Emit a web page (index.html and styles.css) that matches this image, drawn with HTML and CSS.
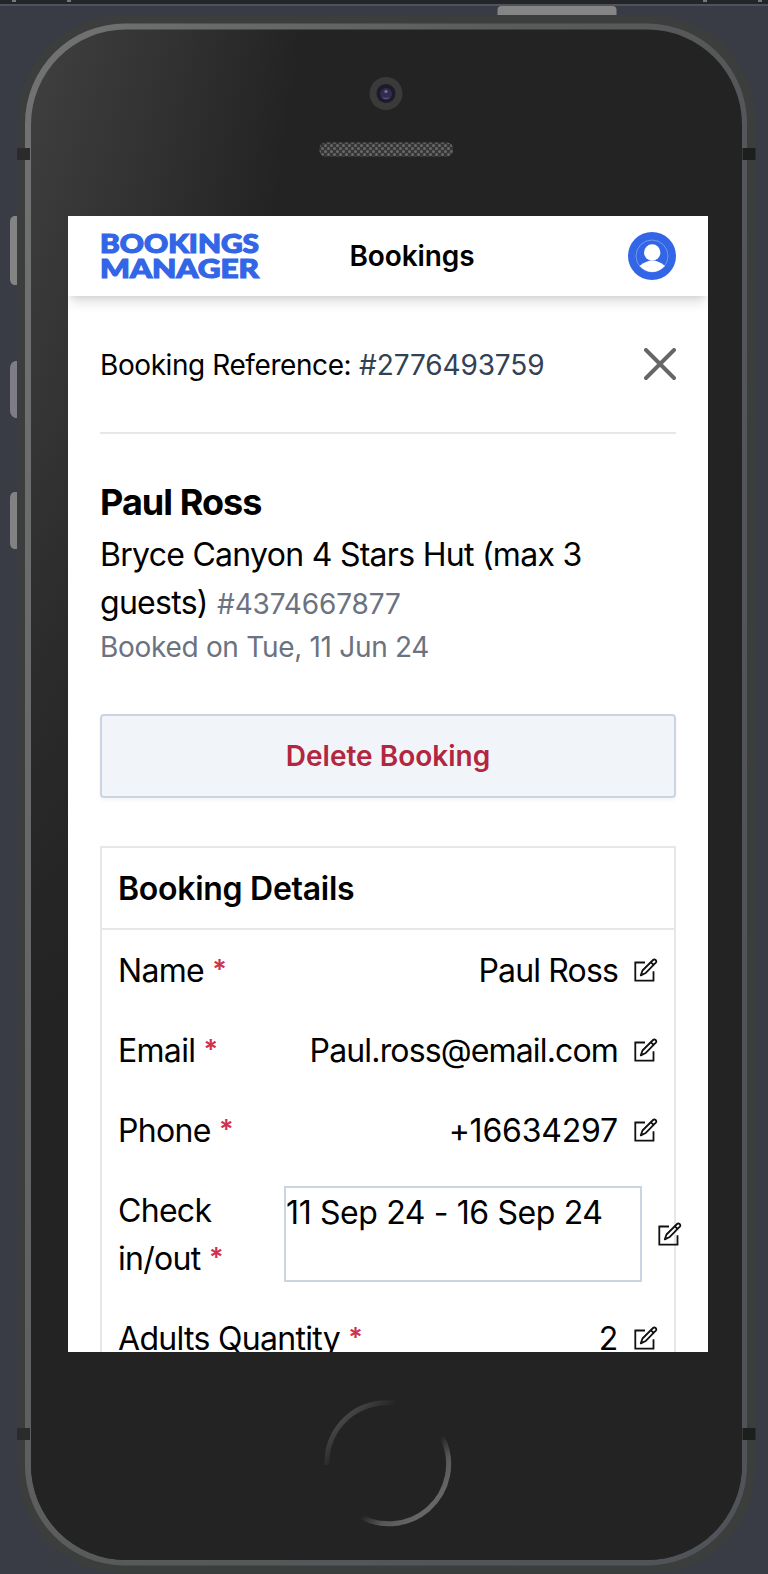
FILE: index.html
```
<!DOCTYPE html>
<html lang="en">
<head>
<meta charset="utf-8">
<title>Bookings Manager</title>
<link rel="stylesheet" href="styles.css">
</head>
<body>
<svg class="device" width="768" height="1574" viewBox="0 0 768 1574" aria-hidden="true">
  <defs>
    <linearGradient id="glass" gradientUnits="userSpaceOnUse" x1="30" y1="110" x2="285" y2="150">
      <stop offset="0" stop-color="#3f3f3f"/><stop offset=".5" stop-color="#323232"/><stop offset="1" stop-color="#232323"/>
    </linearGradient>
    <linearGradient id="fade" x1="0" y1="0" x2="0" y2="1">
      <stop offset="0" stop-color="#232323" stop-opacity="0"/><stop offset=".25" stop-color="#232323" stop-opacity=".2"/><stop offset=".65" stop-color="#232323"/>
    </linearGradient>
    <linearGradient id="edge" x1="0" y1="0" x2="1" y2="0.6">
      <stop offset="0" stop-color="#737373"/><stop offset=".5" stop-color="#595a5a"/><stop offset="1" stop-color="#505358"/>
    </linearGradient>
    <linearGradient id="ringA" gradientUnits="userSpaceOnUse" x1="342" y1="1418" x2="362" y2="1438">
      <stop offset="0" stop-color="#484848"/><stop offset="1" stop-color="#232323"/>
    </linearGradient>
    <linearGradient id="ringB" gradientUnits="userSpaceOnUse" x1="402" y1="1476" x2="430" y2="1504">
      <stop offset="0" stop-color="#232323"/><stop offset=".5" stop-color="#585858"/><stop offset="1" stop-color="#666"/>
    </linearGradient>
    <pattern id="mesh" width="6" height="6" patternUnits="userSpaceOnUse">
      <rect width="6" height="6" fill="#363636"/>
      <circle cx="1.5" cy="1.5" r="1.5" fill="#686868"/><circle cx="4.5" cy="4.5" r="1.5" fill="#686868"/>
    </pattern>
  </defs>
  <rect width="768" height="4" fill="#242529"/>
  <rect y="4" width="768" height="2" fill="#50525b"/>
  <path d="M12 0h4v2h-4zM67 0h4v2h-4zM703 0h4v2h-4zM758 0h4v2h-4z" fill="#777"/>
  <path d="M497.500 16v-6q0-4 4-4h111q4 0 4 4v6z" fill="#858585"/>
  <path d="M18 216h-4q-4 1-4 6v57q0 5 4 6h4z" fill="#848484"/>
  <path d="M18 361h-3q-5 2-5 7v42q0 6 5 8h3z" fill="#7e7c86"/>
  <path d="M18 492h-4q-4 1-4 6v45q0 5 4 6h4z" fill="#828184"/>
  <rect x="17" y="15" width="738.500" height="1558.500" rx="106" fill="#3c3e3d"/>
  <rect x="25" y="23.500" width="722" height="1542" rx="100" fill="url(#edge)"/>
  <rect x="31" y="29.500" width="711" height="1530.500" rx="95" fill="url(#glass)"/>
  <rect x="31" y="29.500" width="711" height="1530.500" rx="95" fill="url(#fade)"/>
  <path d="M17 148h13v12H17zM17 1428h13v12H17z" fill="#2b2b2b"/>
  <path d="M742.500 148h13v12h-13zM742.500 1428h13v12h-13z" fill="#1d1f1d"/>
  <circle cx="386" cy="93.500" r="16.500" fill="#3a3a3a"/>
  <circle cx="386" cy="93.500" r="9.500" fill="#1d1a29"/>
  <circle cx="386" cy="94" r="6" fill="#312c4e"/>
  <circle cx="386" cy="91.500" r="1.600" fill="#77739a"/>
  <path d="M383 97.500q3 2 6 0" fill="none" stroke="#5b567b" stroke-width="1.500"/>
  <rect x="319.500" y="142.500" width="133.500" height="14" rx="6" fill="url(#mesh)"/>
  <path d="M327 1465A59.500 59.500 0 0 1 396 1403.500" fill="none" stroke="url(#ringA)" stroke-width="5"/>
  <path d="M442 1437A59.500 59.500 0 0 1 355 1513" fill="none" stroke="url(#ringB)" stroke-width="5"/>
</svg>

<svg class="sprite" aria-hidden="true">
  <symbol id="edit" viewBox="0 0 24 24">
    <path d="M11 4.500H1.300v18.200h18.200v-9.400" fill="none" stroke="#111" stroke-width="1.800"/>
    <path d="M6.800 17.400l1.700-4.900L19 2q1.300-1.100 2.700 0 1.200 1.400.1 2.700L11.300 15.300zM16.800 4.200l2.700 2.700" fill="none" stroke="#111" stroke-width="1.800" stroke-linejoin="round"/>
  </symbol>
</svg>

<div class="screen">
  <header class="topbar">
    <svg class="logo" width="162" height="48" viewBox="0 0 162 48" role="img" aria-label="Bookings Manager">
      <text x="0" y="20.500" textLength="159" lengthAdjust="spacingAndGlyphs">BOOKINGS</text>
      <text x="0" y="46" textLength="159" lengthAdjust="spacingAndGlyphs">MANAGER</text>
    </svg>
    <h1 class="title">Bookings</h1>
    <svg class="avatar" width="48" height="48" viewBox="0 0 48 48">
      <circle cx="24" cy="24" r="24" fill="#3366e6"/>
      <circle cx="24" cy="24" r="16" fill="none" stroke="#9db6f3" stroke-width=".6"/>
      <circle cx="24.200" cy="20.500" r="8.200" fill="#fff"/>
      <path d="M11.500 34Q24.500 23 37 34 31 40 24.300 40T11.500 34z" fill="#fff"/>
    </svg>
  </header>
  <main class="content">
    <div class="reference">
      <p class="small"><span class="t-ref">Booking Reference:</span> <span class="slate">#2776493759</span></p>
      <svg width="32" height="32" viewBox="0 0 32 32"><path d="M2 2l28 28M30 2L2 30" stroke="#666" stroke-width="3.900" stroke-linecap="round"/></svg>
    </div>
    <section class="summary">
      <h2 class="guest">Paul Ross</h2>
      <p class="cabin">Bryce Canyon 4 Stars Hut (max 3<br>guests) <span class="cabin-id">#4374667877</span></p>
      <p class="small muted t-booked">Booked on Tue, 11 Jun 24</p>
    </section>
    <button class="delete" type="button">Delete Booking</button>
    <section class="card">
      <h3 class="card-title">Booking Details</h3>
      <div class="rows">
        <div class="row"><span class="label">Name <b>*</b></span><span class="value">Paul Ross</span><svg class="edit"><use href="#edit"/></svg></div>
        <div class="row"><span class="label">Email <b>*</b></span><span class="value">Paul.ross@email.com</span><svg class="edit"><use href="#edit"/></svg></div>
        <div class="row"><span class="label">Phone <b>*</b></span><span class="value number">+16634297</span><svg class="edit"><use href="#edit"/></svg></div>
        <div class="row row-dates"><span class="label">Check<br>in/out <b>*</b></span><span class="dates">11 Sep 24 - 16 Sep 24</span><svg class="edit"><use href="#edit"/></svg></div>
        <div class="row"><span class="label">Adults Quantity <b>*</b></span><span class="value number">2</span><svg class="edit"><use href="#edit"/></svg></div>
      </div>
    </section>
  </main>
</div>
</body>
</html>
```
FILE: styles.css
```
* { box-sizing: border-box; }
html, body { height: 1574px; overflow: hidden; }
body {
  margin: 0;
  padding: 216px 60px 0 68px;
  background: #393c45;
  font-family: Inter, "Liberation Sans", sans-serif;
  color: #000;
}
h1, h2, h3, p { margin: 0; }
svg { display: block; flex: none; }
.device { position: absolute; left: 0; top: 0; }
.sprite { position: absolute; width: 0; height: 0; }

.screen { position: relative; width: 640px; height: 1136px; overflow: hidden; background: #fff; }
.topbar {
  display: flex; align-items: center; justify-content: space-between;
  height: 80px; padding: 0 32px; background: #fff;
  box-shadow: 0 8px 12px -2px rgba(0,0,0,.12), 0 4px 8px -4px rgba(0,0,0,.12);
}
.logo { overflow: visible; }
.logo text { font: 900 26px Lato, sans-serif; fill: #3366e6; stroke: #3366e6; stroke-width: 1.2px; }
.title { font-size: 28px; font-weight: 600; line-height: 40px; margin-right: 66px; letter-spacing: -.1px; }

.content { padding: 0 32px; }
.reference {
  display: flex; align-items: center; justify-content: space-between;
  height: 138px; border-bottom: 2px solid #e5e7eb;
}
.small { font-size: 28px; line-height: 40px; }
.reference .small { padding-top: 1px; }
.t-ref { letter-spacing: -.42px; }
.t-booked { letter-spacing: -.3px; }
.slate { color: #334155; letter-spacing: -.12px; }
.muted, .cabin-id { color: #6b7280; }
.summary { padding: 48px 0 47px; }
.guest { font-size: 36px; font-weight: 700; line-height: 40px; margin-bottom: 8px; letter-spacing: -.95px; }
.cabin { padding-top: 1px; margin-bottom: -1px; font-size: 32px; line-height: 48px; white-space: nowrap; letter-spacing: -.72px; }
.cabin-id { font-size: 28px; letter-spacing: -.15px; margin-left: 1px; }
.delete {
  display: block; width: 100%; height: 84px; padding: 0;
  border: 2px solid #cbd5e1; border-radius: 4px; background: #f1f5f9;
  box-shadow: 0 2px 4px rgba(0,0,0,.05);
  font: 600 28px/40px Inter, sans-serif; color: #b3263f;
}
.card { margin-top: 48px; border: 2px solid #e5e7eb; }
.card-title { padding: 17px 16px 15px; font-size: 32px; font-weight: 600; line-height: 48px; letter-spacing: -.28px; border-bottom: 2px solid #e5e7eb; }
.rows { display: flex; flex-direction: column; gap: 32px; padding: 16px 0 16px 16px; }
.row { display: flex; align-items: center; width: 540px; font-size: 32px; line-height: 48px; white-space: nowrap; }
.label, .value { padding-top: 1px; margin-bottom: -1px; }
.label { letter-spacing: -.7px; }
.label b { font-size: 27px; font-weight: 600; line-height: 1; vertical-align: 3px; color: #d1304d; }
.value { margin-left: auto; letter-spacing: -.85px; }
.number { letter-spacing: -.2px; }
.edit { width: 24px; height: 24px; margin-left: 16px; }
.row-dates { width: 564px; }
.dates { width: 358px; height: 96px; margin-left: auto; padding-top: 1px; border: 2px solid #cbd5e1; letter-spacing: -.38px; }
```
